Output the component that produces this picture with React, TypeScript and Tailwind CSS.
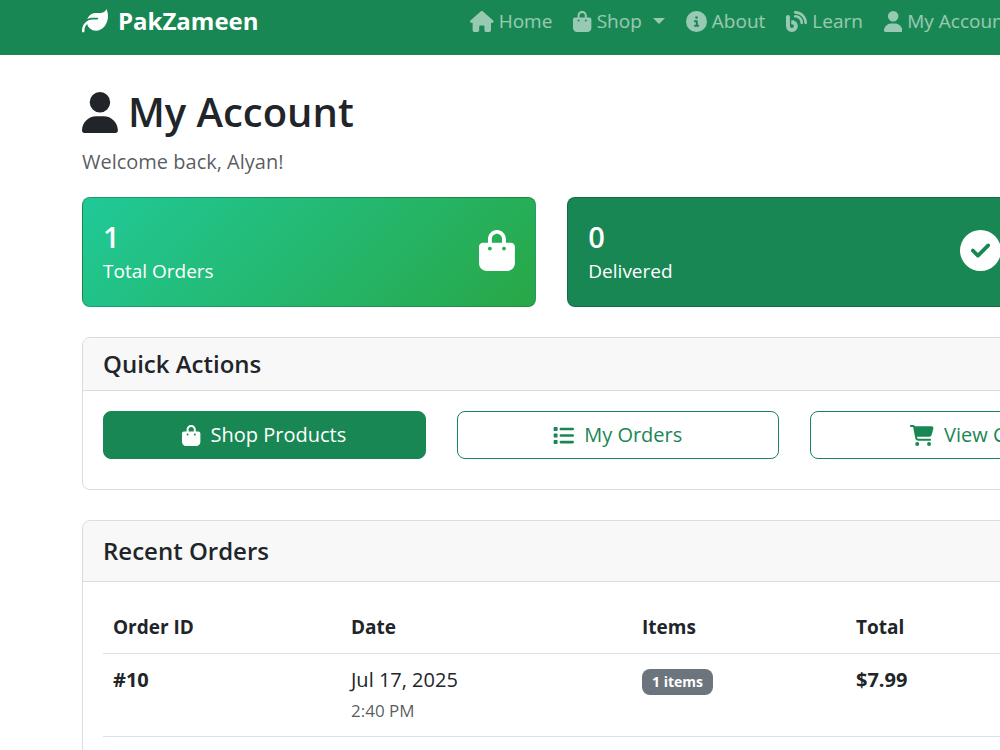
import type { ReactNode } from "react";
import { FaBlog, FaCircleCheck, FaCircleInfo, FaList } from "react-icons/fa6";

const navIcon = "h-[21px] w-auto shrink-0";
const statIcon = "h-[41px] w-auto shrink-0";

function LeafIcon({ className }: { className: string }) {
  return (
    <svg viewBox="0 0 512 512" fill="currentColor" className={className} aria-hidden="true">
      <path d="M272 96c-78.6 0-145.1 51.5-167.7 122.5c33.6-17 71.5-26.5 111.7-26.5l88 0c8.8 0 16 7.2 16 16s-7.2 16-16 16l-16 0-72 0s0 0 0 0c-16.6 0-32.7 1.9-48.3 5.4c-25.9 5.9-49.9 16.4-71.4 30.7c0 0 0 0 0 0C38.3 298.8 0 364.9 0 440l0 16c0 13.3 10.7 24 24 24s24-10.7 24-24l0-16c0-48.7 20.7-92.5 53.8-123.2C121.6 392.3 190.3 448 272 448l1 0c132.1-.7 239-130.9 239-291.4c0-42.6-7.5-83.1-21.1-119.6c-2.6-6.9-12.7-6.6-16.2-.1C455.9 72.1 418.7 96 376 96L272 96z" />
    </svg>
  );
}

function UserIcon({ className }: { className: string }) {
  return (
    <svg viewBox="0 0 448 512" fill="currentColor" className={className} aria-hidden="true">
      <path d="M224 256A128 128 0 1 0 224 0a128 128 0 1 0 0 256zm-45.7 48C79.8 304 0 383.8 0 482.3C0 498.7 13.3 512 29.7 512l388.6 0c16.4 0 29.7-13.3 29.7-29.7C448 383.8 368.2 304 269.7 304l-91.4 0z" />
    </svg>
  );
}

function BagIcon({ className }: { className: string }) {
  return (
    <svg viewBox="0 0 448 512" fill="currentColor" className={className} aria-hidden="true">
      <path d="M160 112c0-35.3 28.7-64 64-64s64 28.7 64 64l0 48-128 0 0-48zm-48 48l-64 0c-26.5 0-48 21.5-48 48L0 416c0 53 43 96 96 96l256 0c53 0 96-43 96-96l0-208c0-26.5-21.5-48-48-48l-64 0 0-48C336 50.1 285.9 0 224 0S112 50.1 112 112l0 48zm24 48a24 24 0 1 1 0 48 24 24 0 1 1 0-48zm152 24a24 24 0 1 1 48 0 24 24 0 1 1 -48 0z" />
    </svg>
  );
}

function HouseIcon({ className }: { className: string }) {
  return (
    <svg viewBox="0 0 576 512" fill="currentColor" className={className} aria-hidden="true">
      <path d="M575.8 255.5c0 18-15 32.1-32 32.1l-32 0 .7 160.2c0 2.7-.2 5.4-.5 8.1l0 16.2c0 22.1-17.9 40-40 40l-16 0c-1.1 0-2.2 0-3.3-.1c-1.4 .1-2.8 .1-4.2 .1L416 512l-24 0c-22.1 0-40-17.9-40-40l0-24 0-64c0-17.7-14.3-32-32-32l-64 0c-17.7 0-32 14.3-32 32l0 64 0 24c0 22.1-17.9 40-40 40l-24 0-31.9 0c-1.5 0-3-.1-4.5-.2c-1.2 .1-2.4 .2-3.6 .2l-16 0c-22.1 0-40-17.9-40-40l0-112c0-.9 0-1.9 .1-2.8l0-69.7-32 0c-18 0-32-14-32-32.1c0-9 3-17 10-24L266.4 8c7-7 15-8 22-8s15 2 21 7L564.8 231.5c8 7 12 15 11 24z" />
    </svg>
  );
}

function CartIcon({ className }: { className: string }) {
  return (
    <svg viewBox="0 0 576 512" fill="currentColor" className={className} aria-hidden="true">
      <path d="M0 24C0 10.7 10.7 0 24 0L69.5 0c22 0 41.5 12.8 50.6 32l411 0c26.3 0 45.5 25 38.6 50.4l-41 152.3c-8.5 31.4-37 53.3-69.5 53.3l-288.5 0 5.4 28.5c2.2 11.3 12.1 19.5 23.6 19.5L488 336c13.3 0 24 10.7 24 24s-10.7 24-24 24l-288.3 0c-34.6 0-64.3-24.6-70.7-58.5L77.4 54.5c-.7-3.8-4-6.5-7.9-6.5L24 48C10.7 48 0 37.3 0 24zM128 464a48 48 0 1 1 96 0 48 48 0 1 1 -96 0zm336-48a48 48 0 1 1 0 96 48 48 0 1 1 0-96z" />
    </svg>
  );
}

function NavLink({ icon, label, caret }: { icon: ReactNode; label: string; caret?: boolean }) {
  return (
    <a href="#" className="flex items-center gap-[5px] text-white/55 hover:text-white/75">
      {icon}
      <span>{label}</span>
      {caret && (
        <svg viewBox="0 0 12 6" className="ml-[6px] h-[6px] w-[12px] fill-current" aria-hidden="true">
          <path d="M0 0h12L6 6z" />
        </svg>
      )}
    </a>
  );
}

function StatCard({ value, label, icon, tone }: { value: string; label: string; icon: ReactNode; tone: string }) {
  return (
    <div className={`flex justify-between rounded-lg border border-black/20 p-5 text-white ${tone}`}>
      <div>
        <p className="text-[29px] leading-[38px] font-semibold">{value}</p>
        <p className="text-[19px] leading-[30px]">{label}</p>
      </div>
      <div className="flex items-center pb-1">{icon}</div>
    </div>
  );
}

function ActionLink({ icon, label, solid }: { icon: ReactNode; label: string; solid?: boolean }) {
  return (
    <a
      href="#"
      className={`flex h-12 items-center justify-center gap-[10px] rounded-lg border border-[#198754] ${
        solid ? "bg-[#198754] text-white" : "text-[#198754]"
      }`}
    >
      {icon}
      {label}
    </a>
  );
}

export default function App() {
  return (
    <div className="min-h-screen overflow-x-hidden bg-white font-['Open_Sans','Noto_Sans',sans-serif] text-[20px] leading-[30px] whitespace-nowrap text-[#212529]">
      <div className="min-w-[1589px]">
        <nav className="bg-[#198754] px-[82px] pt-[6px] pb-[19px]">
          <div className="flex items-center">
            <a href="#" className="flex w-[388px] items-center gap-[10px] text-[24px] font-bold text-white">
              <LeafIcon className="h-[26px] w-auto" />
              PakZameen
            </a>
            <div className="flex items-center gap-[21px] text-[19px]">
              <NavLink icon={<HouseIcon className={navIcon} />} label="Home" />
              <NavLink icon={<BagIcon className={navIcon} />} label="Shop" caret />
              <NavLink icon={<FaCircleInfo className={navIcon} />} label="About" />
              <NavLink icon={<FaBlog className={navIcon} />} label="Learn" />
              <NavLink icon={<UserIcon className={navIcon} />} label="My Account" />
            </div>
          </div>
        </nav>

        <main className="flex flex-col px-[82px] pt-8">
          <h1 className="flex items-center gap-[10px] text-[40px] leading-[50px] font-semibold">
            <UserIcon className={statIcon} />
            My Account
          </h1>
          <p className="mt-[10px] text-[#212529]/75">Welcome back, Alyan!</p>

          <section className="mt-5 grid grid-cols-3 gap-[31px]">
            <StatCard
              value="1"
              label="Total Orders"
              tone="bg-linear-135 from-[#20c997] to-[#28a745]"
              icon={<BagIcon className={statIcon} />}
            />
            <StatCard value="0" label="Delivered" tone="bg-[#198754]" icon={<FaCircleCheck className={statIcon} />} />
          </section>

          <section className="mt-[30px] rounded-lg border border-[#dbdcdd]">
            <header className="rounded-t-lg border-b border-[#dbdcdd] bg-[#f8f8f8] px-5 py-[10px]">
              <h2 className="text-[24px] leading-[32px] font-semibold">Quick Actions</h2>
            </header>
            <div className="grid grid-cols-4 gap-[31px] px-5 pt-5 pb-[30px]">
              <ActionLink solid icon={<BagIcon className={navIcon} />} label="Shop Products" />
              <ActionLink icon={<FaList className={navIcon} />} label="My Orders" />
              <ActionLink icon={<CartIcon className={navIcon} />} label="View Cart" />
            </div>
          </section>

          <section className="mt-[30px] rounded-lg border border-[#dbdcdd]">
            <header className="rounded-t-lg border-b border-[#dbdcdd] bg-[#f8f8f8] px-5 py-[14px]">
              <h2 className="text-[24px] leading-[32px] font-semibold">Recent Orders</h2>
            </header>
            <div className="px-5 pt-5 pb-10">
              <table className="w-full table-fixed border-collapse text-left leading-[31px]">
                <colgroup>
                  <col className="w-[238px]" />
                  <col className="w-[291px]" />
                  <col className="w-[214px]" />
                  <col />
                </colgroup>
                <thead className="text-[19px]">
                  <tr className="border-b border-[#dee2e6]">
                    <th className="p-[10px] font-bold">Order ID</th>
                    <th className="p-[10px] font-bold">Date</th>
                    <th className="p-[10px] font-bold">Items</th>
                    <th className="p-[10px] font-bold">Total</th>
                  </tr>
                </thead>
                <tbody>
                  <tr className="border-b border-[#dee2e6] align-top">
                    <td className="p-[10px] font-bold">#10</td>
                    <td className="p-[10px]">
                      <div>Jul 17, 2025</div>
                      <div className="text-[17px] text-[#212529]/75">2:40 PM</div>
                    </td>
                    <td className="p-[10px]">
                      <span className="mt-[5px] inline-block rounded-lg bg-[#6c757d] px-[10px] align-top text-[14px] leading-[26px] font-bold text-white">
                        1 items
                      </span>
                    </td>
                    <td className="p-[10px] font-bold">$7.99</td>
                  </tr>
                </tbody>
              </table>
            </div>
          </section>
        </main>
      </div>
    </div>
  );
}
